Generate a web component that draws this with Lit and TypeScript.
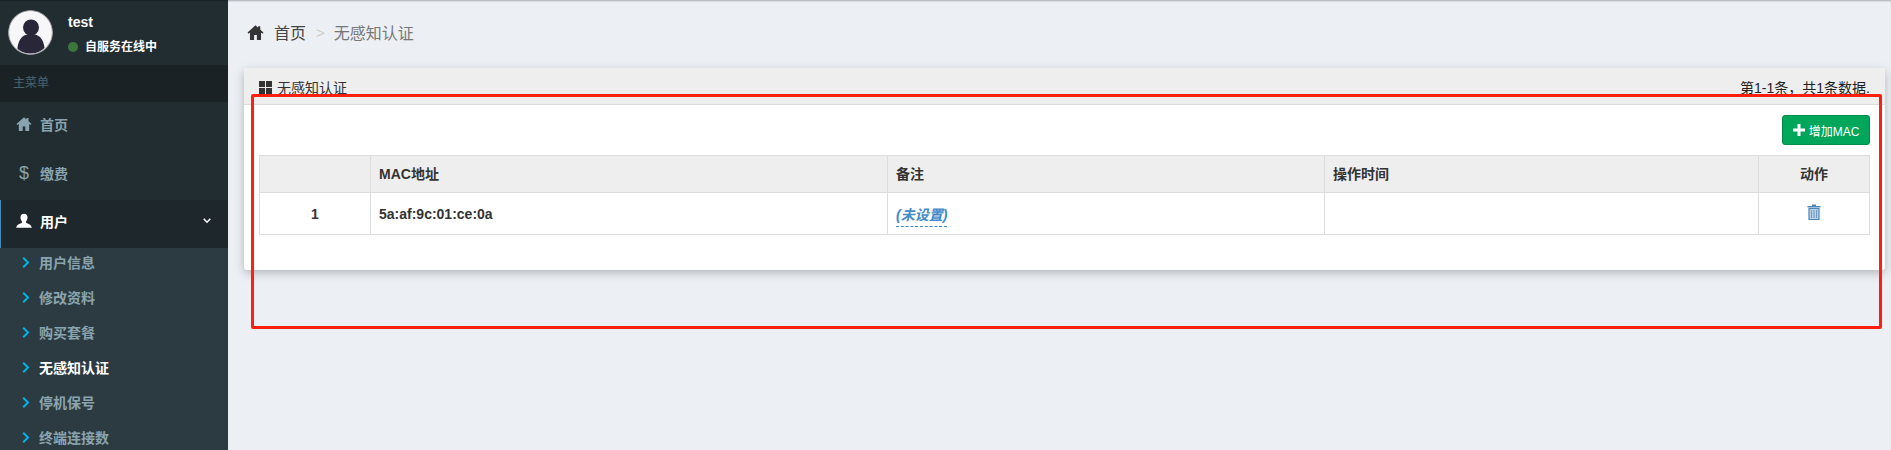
import { LitElement, html, css, svg } from "lit";
import { customElement } from "lit/decorators.js";

const home = svg`<path d="M8 1.200 .5 8l.9 1.100L2.800 7.900V15h3.900v-4.600h2.600V15h3.900V7.900l1.400 1.200.9-1.100L12.500 5.300V2h-2v1.500z" fill="currentColor"/>`;
const user = svg`<path d="M8 .8c2.300 0 3.500 1.600 3.500 3.700 0 1.600-.6 3.100-1.500 3.900v1.200c0 .9 5.300 1.300 5.800 5.200H.2c.5-3.900 5.800-4.300 5.800-5.200V8.400C5.100 7.600 4.500 6.100 4.500 4.500 4.500 2.400 5.700.8 8 .8z" fill="currentColor"/>`;

@customElement("app-root")
export class AppRoot extends LitElement {
  static styles = css`
    :host { display: block; width: 1891px; height: 450px; overflow: hidden; position: relative; font-family: "Liberation Sans", "Noto Sans CJK SC", sans-serif; font-size: 13px; background: #ecf0f5; }
    * { box-sizing: border-box; }
    .page { display: flex; height: 450px; align-items: flex-start; }
    .side { width: 228px; height: 450px; flex: none; background: #222d32; overflow: hidden; }
    .panel { height: 65px; display: flex; gap: 15px; padding: 10px 0 0 8px; box-shadow: inset 0 2px 1px -1px #1a2226; }
    .avatar { width: 45px; height: 45px; flex: none; border-radius: 50%; }
    .uname { color: #fff; font-weight: 700; font-size: 14px; line-height: 16px; margin-top: 4px; }
    .status { color: #fff; font-weight: 700; font-size: 12px; line-height: 16px; margin-top: 8px; display: flex; align-items: center; gap: 7px; padding-top: 1px; }
    .dot { width: 10px; height: 10px; border-radius: 50%; background: #3c763d; }
    .hdr { height: 37px; background: #1a2226; color: #4b646f; font-size: 12px; line-height: 37px; padding-left: 13px; }
    .item { display: flex; align-items: center; height: 49px; padding: 0 0 6px 16px; color: #8aa4af; font-size: 14px; font-weight: 700; }
    .item .ic { width: 16px; height: 16px; margin-right: 8px; flex: none; display: flex; justify-content: center; }
    .item .ic svg { width: 16px; height: 16px; }
    .dollar { font-size: 18px; line-height: 16px; font-weight: 400; }
    .item.open { height: 48px; background: #1e282c; color: #fff; border-left: 1px solid #3c8dbc; padding-left: 15px; padding-bottom: 6px; }
    .chev { width: 8px; height: 6px; margin-left: auto; margin-right: 17px; }
    .sub { background: #2c3b41; height: 202px; }
    .sub a { display: flex; align-items: center; height: 35px; padding: 0 0 7px 22px; color: #8aa4af; font-size: 14px; font-weight: 700; }
    .sub a.on { color: #fff; }
    .sub svg { width: 8px; height: 11px; margin-right: 9px; flex: none; }
    .main { flex: 1; min-width: 0; padding: 0 6px 0 16px; box-shadow: inset 0 2px 2px -1px #a8acb2; height: 450px; }
    .crumb { height: 68px; display: flex; align-items: center; padding: 0 0 4px 3px; font-size: 16px; color: #444; gap: 6px; }
    .crumb svg { width: 17px; height: 17px; color: #333; margin-right: 4px; }
    .crumb .sep { color: #ccc; margin: 0 3px 0 4px; font-size: 15px; }
    .crumb .cur { color: #777; }
    .card { background: #fff; border-radius: 3px; box-shadow: 0 3px 10px rgba(0,0,0,.25); height: 202px; }
    .chead { height: 37px; background: #eee; border-bottom: 1px solid #ddd; border-radius: 3px 3px 0 0; display: flex; align-items: center; justify-content: space-between; padding: 2px 15px 0 15px; color: #333; }
    .ctitle { display: flex; align-items: center; gap: 5px; font-size: 14px; }
    .grid4 { width: 13px; height: 13px; display: grid; grid-template-columns: 6px 6px; grid-template-rows: 6px 6px; gap: 1px; }
    .grid4 i { background: #333; }
    .count { font-size: 14px; color: #222; }
    .cbody { padding: 10px 15px; }
    .tools { display: flex; justify-content: flex-end; height: 40px; }
    .btn { display: flex; align-items: center; justify-content: center; gap: 4px; width: 88px; height: 30px; background: #00a65a; border: 1px solid #008d4c; border-radius: 3px; color: #fff; font-size: 12px; font-weight: 400; }
    .btn svg { width: 12px; height: 12px; }
    table { width: 1610px; border-collapse: collapse; table-layout: fixed; color: #333; font-weight: 700; font-size: 14px; }
    th, td { border: 1px solid #ddd; padding: 0 8px; text-align: left; }
    th { background: #eee; height: 37px; padding-bottom: 2px; }
    td { height: 42px; }
    th:first-child, td:first-child, th:last-child, td:last-child { text-align: center; }
    .ed { color: #428bca; font-style: italic; border-bottom: 1px dashed #428bca; padding-bottom: 3px; }
    .trash { width: 14px; height: 16px; vertical-align: middle; margin-bottom: 3px; }
    .mark { position: absolute; left: 251px; top: 94px; width: 1631px; height: 235px; border: 3px solid #ff1f0f; border-radius: 2px; pointer-events: none; }
  `;

  render() {
    const subs = ["用户信息", "修改资料", "购买套餐", "无感知认证", "停机保号", "终端连接数"];
    const chevron = svg`<path d="M1.200 .7 6 5.500 1.200 10.300" fill="none" stroke="#00b4e6" stroke-width="2"/>`;
    return html`<div class="page">
      <aside class="side">
        <div class="panel">
          <svg class="avatar" viewBox="0 0 45 45">
            <circle cx="22.500" cy="22.500" r="22" fill="#f7f7f9" stroke="#9a9a9a" stroke-width="1.200"/>
            <clipPath id="c"><circle cx="22.500" cy="22.500" r="21"/></clipPath>
            <g clip-path="url(#c)" fill="#29263a"><circle cx="23" cy="17.500" r="8"/><path d="M9 45c0-14 4-21 14-21s14 7 14 21z"/></g>
          </svg>
          <div>
            <div class="uname">test</div>
            <div class="status"><span class="dot"></span>自服务在线中</div>
          </div>
        </div>
        <div class="hdr">主菜单</div>
        <div class="item"><span class="ic"><svg viewBox="0 0 16 16">${home}</svg></span>首页</div>
        <div class="item"><span class="ic dollar">$</span>缴费</div>
        <div class="item open"><span class="ic"><svg viewBox="0 0 16 16">${user}</svg></span>用户
          <svg class="chev" viewBox="0 0 8 6"><path d="M.7 .8 4 4.200 7.300 .8" fill="none" stroke="#fff" stroke-width="1.500"/></svg></div>
        <div class="sub">
          ${subs.map((s, i) => html`<a class=${i === 3 ? "on" : ""}><svg viewBox="0 0 8 11">${chevron}</svg>${s}</a>`)}
        </div>
      </aside>
      <main class="main">
        <div class="crumb"><svg viewBox="0 0 16 16">${home}</svg><span>首页</span><span class="sep">&gt;</span><span class="cur">无感知认证</span></div>
        <section class="card">
          <div class="chead">
            <div class="ctitle"><span class="grid4"><i></i><i></i><i></i><i></i></span>无感知认证</div>
            <div class="count">第1-1条，共1条数据.</div>
          </div>
          <div class="cbody">
            <div class="tools"><div class="btn"><svg viewBox="0 0 12 12"><path d="M4.500 0h3v4.500H12v3H7.500V12h-3V7.500H0v-3h4.500z" fill="#fff"/></svg>增加MAC</div></div>
            <table>
              <colgroup><col style="width:111px"/><col style="width:517px"/><col style="width:437px"/><col style="width:434px"/><col style="width:111px"/></colgroup>
              <tr><th></th><th>MAC地址</th><th>备注</th><th>操作时间</th><th>动作</th></tr>
              <tr><td>1</td><td>5a:af:9c:01:ce:0a</td><td><span class="ed">(未设置)</span></td><td></td><td>
                <svg class="trash" viewBox="0 0 14 16"><path d="M5 .5h4v1.500h4.500v1.500H.5V2H5z" fill="#4a87b8"/><path d="M2 4.500h10v11H2z" fill="#b9cfe3" stroke="#4a87b8" stroke-width="1.200"/><path d="M4.500 6v8M7 6v8M9.500 6v8" stroke="#6f9cc6" stroke-width="1"/></svg>
              </td></tr>
            </table>
          </div>
        </section>
      </main>
    </div>
    <div class="mark"></div>`;
  }
}
